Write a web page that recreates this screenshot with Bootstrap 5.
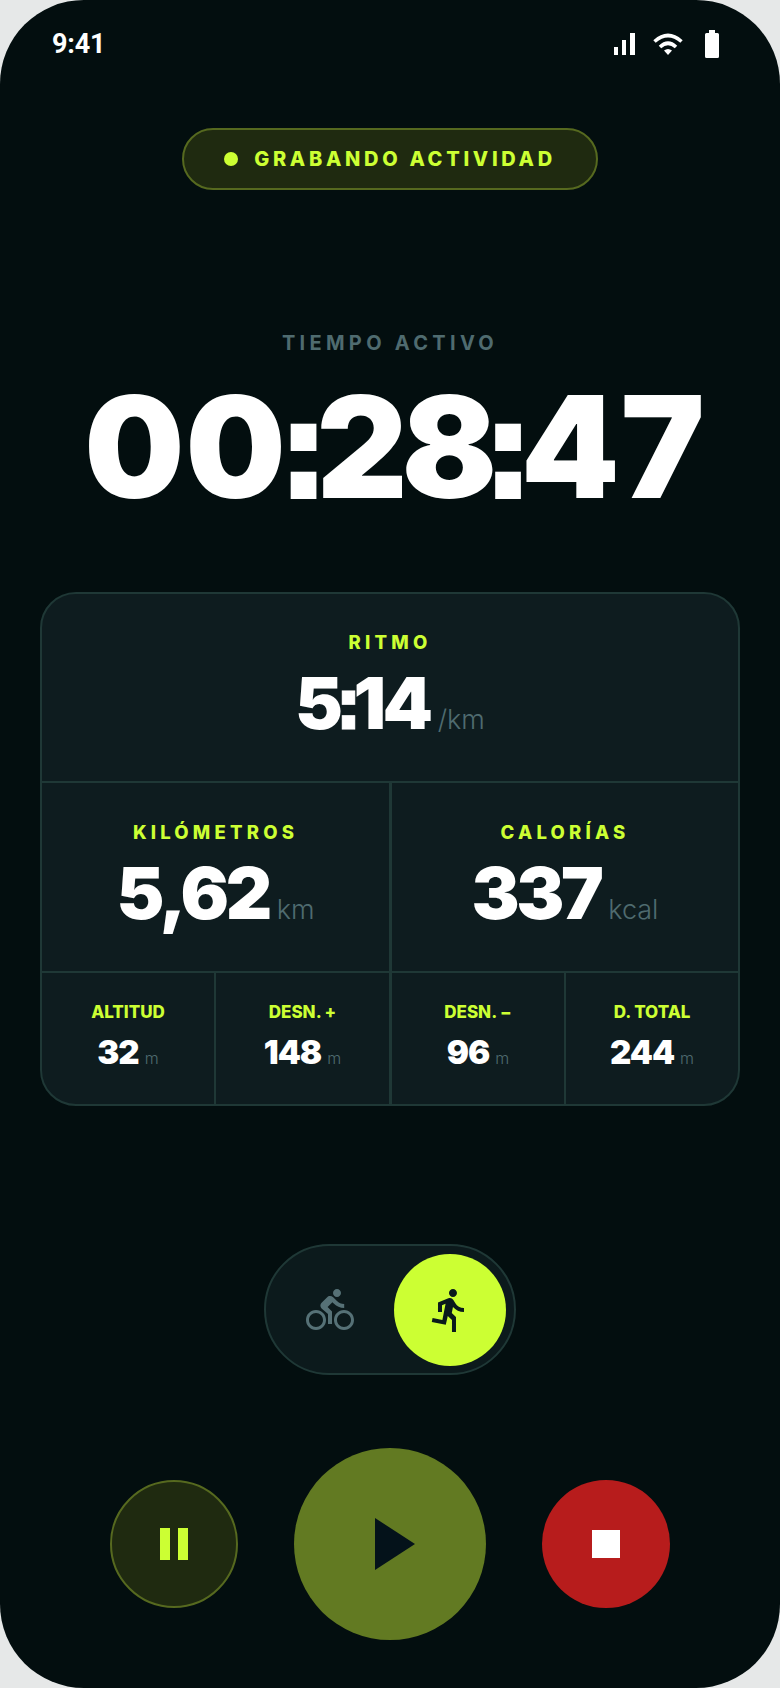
<!DOCTYPE html>
<html lang="es">
<head>
  <meta charset="UTF-8" />
  <title>Grabando actividad</title>
  <meta name="viewport" content="width=device-width, initial-scale=1"/>
  <link href="https://cdn.jsdelivr.net/npm/bootstrap@5.3.0/dist/css/bootstrap.min.css" rel="stylesheet"/>
  <style>
    :root {
      --lime: #ccff33;
      --ink: #030e0f;
      --line: #1f3836;
      --muted: #4f6b6f;
    }
    html, body { margin: 0; background: #e6e8e8; }
    body { font-family: 'Inter', sans-serif; width: 780px; height: 1688px; overflow: hidden; }
    .phone { width: 780px; height: 1688px; background: var(--ink); border-radius: 84px; }
    .status-row { height: 88px; padding: 0 61px 0 52px; color: #fff; }
    .clock-txt { font-family: 'Roboto', sans-serif; font-size: 27px; font-weight: 700; letter-spacing: -.2px; line-height: 1; margin-top: 1px; }
    .sig-icon { margin-right: 18px; }
    .wifi-icon { margin-right: 22px; }
    .rec-pill {
      width: 416px; height: 62px; margin-top: 40px; gap: 16px;
      background: #1f2a10; border: 2px solid #56691f; border-radius: 31px;
    }
    .rec-dot { width: 14px; height: 14px; background: var(--lime); border-radius: 50%; }
    .rec-txt { color: var(--lime); font-size: 20px; font-weight: 800; letter-spacing: 3.7px; line-height: 1; }
    .time-label { margin-top: 141px; color: var(--muted); font-size: 20px; font-weight: 700; letter-spacing: 4.3px; line-height: 24px; }
    .time-big { margin-top: 27px; padding-left: 10px; color: #fff; font-size: 141px; font-weight: 900; letter-spacing: 1px; line-height: 130px; white-space: nowrap; }
    .tight-pair { letter-spacing: -6px; }
    .sq-colon { font-family: 'DejaVu Sans', sans-serif; font-weight: 700; line-height: 0; }
    .time-big .sq-colon { font-size: 134px; letter-spacing: -14px; margin-left: -10px; -webkit-text-stroke: 2px #fff; }
    .stats-box { width: 700px; margin-top: 80px; background: #0e1c1f; border: 2px solid var(--line); border-radius: 36px; overflow: hidden; }
    .cell-top { height: 189px; padding-top: 15px; }
    .cell-lg { height: 188px; padding-top: 15px; }
    .cell-sm { height: 131px; padding-top: 3px; }
    .line-b { border-bottom: 2px solid var(--line); }
    .line-r { border-right: 2px solid var(--line); }
    .line-mid { border-right: 3px solid var(--line); }
    .grid-two { display: grid; grid-template-columns: 350px 346px; }
    .grid-four { display: grid; grid-template-columns: 174px 176px 174px 172px; }
    .stat-label { color: var(--lime); font-size: 18.5px; font-weight: 800; letter-spacing: 4.2px; line-height: 22px; }
    .stat-num { color: #fff; font-size: 72px; font-weight: 900; letter-spacing: -3.5px; line-height: 78px; margin-top: 11px; white-space: nowrap; }
    .stat-num .sq-colon { font-size: 70px; letter-spacing: -9px; margin-left: -5px; -webkit-text-stroke: 1px #fff; }
    .stat-unit { color: var(--muted); font-size: 27px; font-weight: 300; letter-spacing: 0; margin-left: 8px; }
    .mini-label { color: var(--lime); font-size: 17px; font-weight: 800; letter-spacing: 0; line-height: 20px; }
    .mini-num { color: #fff; font-size: 33px; font-weight: 900; letter-spacing: -1px; line-height: 40px; margin-top: 10px; }
    .mini-unit { color: var(--muted); font-size: 16px; font-weight: 300; letter-spacing: 0; margin-left: 6px; }
    .mode-toggle { width: 252px; height: 131px; margin-top: 138px; background: #0c1a1c; border: 2px solid var(--line); border-radius: 66px; padding: 8px; }
    .mode-opt { width: 112px; height: 112px; border-radius: 50%; }
    .mode-on { background: var(--lime); }
    .ctl-row { gap: 56px; margin-top: 73px; }
    .ctl-btn { border-radius: 50%; width: 128px; height: 128px; padding: 0; }
    .ctl-pause { background: #1f2a10; border: 2px solid #56691f; }
    .ctl-play { width: 192px; height: 192px; background: #627a22; border: 0; }
    .ctl-stop { background: #b71c1c; border: 0; }
    .stop-sq { width: 28px; height: 28px; background: #fff; }
    .tri-shift { margin-left: 10px; }
  </style>
</head>
<body>
<div class="phone d-flex flex-column align-items-center">
  <div class="status-row w-100 d-flex justify-content-between align-items-center">
    <span class="clock-txt">9:41</span>
    <div class="d-flex align-items-center">
      <svg class="sig-icon" width="21" height="22" viewBox="0 0 21 22" fill="#fff">
        <rect x="0" y="14" width="4" height="8"/><rect x="8" y="7" width="4" height="15"/><rect x="16" y="0" width="5" height="22"/>
      </svg>
      <svg class="wifi-icon" width="30" height="22" viewBox="0 0 30 22" fill="none" stroke="#fff" stroke-width="3.600">
        <path d="M1.500 8.500Q15 -3.500 28.500 8.500"/><path d="M7 14Q15 6.500 23 14"/><path d="M11 17.500L15 22L19 17.500Q15 14.500 11 17.500Z" fill="#fff" stroke="none"/>
      </svg>
      <svg width="14" height="28" viewBox="0 0 14 28" fill="#fff">
        <path d="M4 0H10V3H12.500Q14 3 14 4.500V26.500Q14 28 12.500 28H1.500Q0 28 0 26.500V4.500Q0 3 1.500 3H4Z"/>
      </svg>
    </div>
  </div>

  <div class="rec-pill d-flex align-items-center justify-content-center">
    <span class="rec-dot"></span>
    <span class="rec-txt">GRABANDO ACTIVIDAD</span>
  </div>

  <div class="time-label text-center">TIEMPO ACTIVO</div>
  <div class="time-big text-center">00<span class="sq-colon">:</span><span class="tight-pair">28</span><span class="sq-colon">:</span>47</div>

  <div class="stats-box">
    <div class="cell-top line-b d-flex flex-column align-items-center justify-content-center">
      <div class="stat-label">RITMO</div>
      <div class="stat-num">5<span class="sq-colon">:</span>14<span class="stat-unit">/km</span></div>
    </div>
    <div class="grid-two line-b">
      <div class="line-mid cell-lg d-flex flex-column align-items-center justify-content-center">
        <div class="stat-label">KILÓMETROS</div>
        <div class="stat-num">5,62<span class="stat-unit">km</span></div>
      </div>
      <div class="cell-lg d-flex flex-column align-items-center justify-content-center">
        <div class="stat-label">CALORÍAS</div>
        <div class="stat-num">337<span class="stat-unit">kcal</span></div>
      </div>
    </div>
    <div class="grid-four">
      <div class="line-r cell-sm d-flex flex-column align-items-center justify-content-center">
        <div class="mini-label">ALTITUD</div>
        <div class="mini-num">32<span class="mini-unit">m</span></div>
      </div>
      <div class="line-mid cell-sm d-flex flex-column align-items-center justify-content-center">
        <div class="mini-label">DESN. +</div>
        <div class="mini-num">148<span class="mini-unit">m</span></div>
      </div>
      <div class="line-r cell-sm d-flex flex-column align-items-center justify-content-center">
        <div class="mini-label">DESN. −</div>
        <div class="mini-num">96<span class="mini-unit">m</span></div>
      </div>
      <div class="cell-sm d-flex flex-column align-items-center justify-content-center">
        <div class="mini-label">D. TOTAL</div>
        <div class="mini-num">244<span class="mini-unit">m</span></div>
      </div>
    </div>
  </div>

  <div class="mode-toggle d-flex justify-content-between align-items-center">
    <div class="mode-opt d-flex align-items-center justify-content-center">
      <svg width="48" height="48" viewBox="0 0 24 24" fill="#567176"><path d="M15.500 5.500c1.100 0 2-.9 2-2s-.9-2-2-2-2 .9-2 2 .9 2 2 2zM5 12c-2.800 0-5 2.200-5 5s2.200 5 5 5 5-2.200 5-5-2.200-5-5-5zm0 8.500c-1.900 0-3.500-1.600-3.500-3.500s1.600-3.500 3.500-3.500 3.500 1.600 3.500 3.500-1.600 3.500-3.500 3.500zm5.800-10l2.400-2.400.8.8c1.300 1.300 3 2.100 5.100 2.100V9c-1.500 0-2.700-.6-3.600-1.500l-1.900-1.900c-.5-.4-1-.6-1.600-.6s-1.100.2-1.400.6L7.800 8.400c-.4.4-.6.9-.6 1.400 0 .6.2 1.100.6 1.400L11 14v5h2v-6.200l-2.200-2.300zM19 12c-2.800 0-5 2.200-5 5s2.200 5 5 5 5-2.200 5-5-2.200-5-5-5zm0 8.500c-1.900 0-3.500-1.600-3.500-3.500s1.600-3.500 3.500-3.500 3.500 1.600 3.500 3.500-1.600 3.500-3.500 3.500z"/></svg>
    </div>
    <div class="mode-opt mode-on d-flex align-items-center justify-content-center">
      <svg width="48" height="48" viewBox="0 0 24 24" fill="#0a1a1c"><path d="M13.490 5.480c1.100 0 2-.9 2-2s-.9-2-2-2-2 .9-2 2 .9 2 2 2zm-3.600 13.900l1-4.400 2.100 2v6h2v-7.500l-2.100-2 .6-3c1.300 1.500 3.300 2.500 5.500 2.500v-2c-1.900 0-3.500-1-4.300-2.400l-1-1.600c-.4-.6-1-1-1.700-1-.3 0-.5.1-.8.1l-5.200 2.200v4.700h2v-3.400l1.800-.7-1.600 8.100-4.900-1-.4 2 7 1.400z"/></svg>
    </div>
  </div>

  <div class="ctl-row d-flex align-items-center">
    <button type="button" class="btn ctl-btn ctl-pause d-flex align-items-center justify-content-center" aria-label="Pausa">
      <svg width="28" height="32" viewBox="0 0 28 32" fill="#ccff33"><rect x="0" width="10" height="32"/><rect x="18" width="10" height="32"/></svg>
    </button>
    <button type="button" class="btn ctl-btn ctl-play d-flex align-items-center justify-content-center" aria-label="Reanudar">
      <svg class="tri-shift" width="40" height="52" viewBox="0 0 40 52" fill="#04121a"><path d="M0 0L40 26L0 52Z"/></svg>
    </button>
    <button type="button" class="btn ctl-btn ctl-stop d-flex align-items-center justify-content-center" aria-label="Parar">
      <span class="stop-sq"></span>
    </button>
  </div>
</div>
<script src="https://cdn.jsdelivr.net/npm/bootstrap@5.3.0/dist/js/bootstrap.bundle.min.js"></script>
</body>
</html>
